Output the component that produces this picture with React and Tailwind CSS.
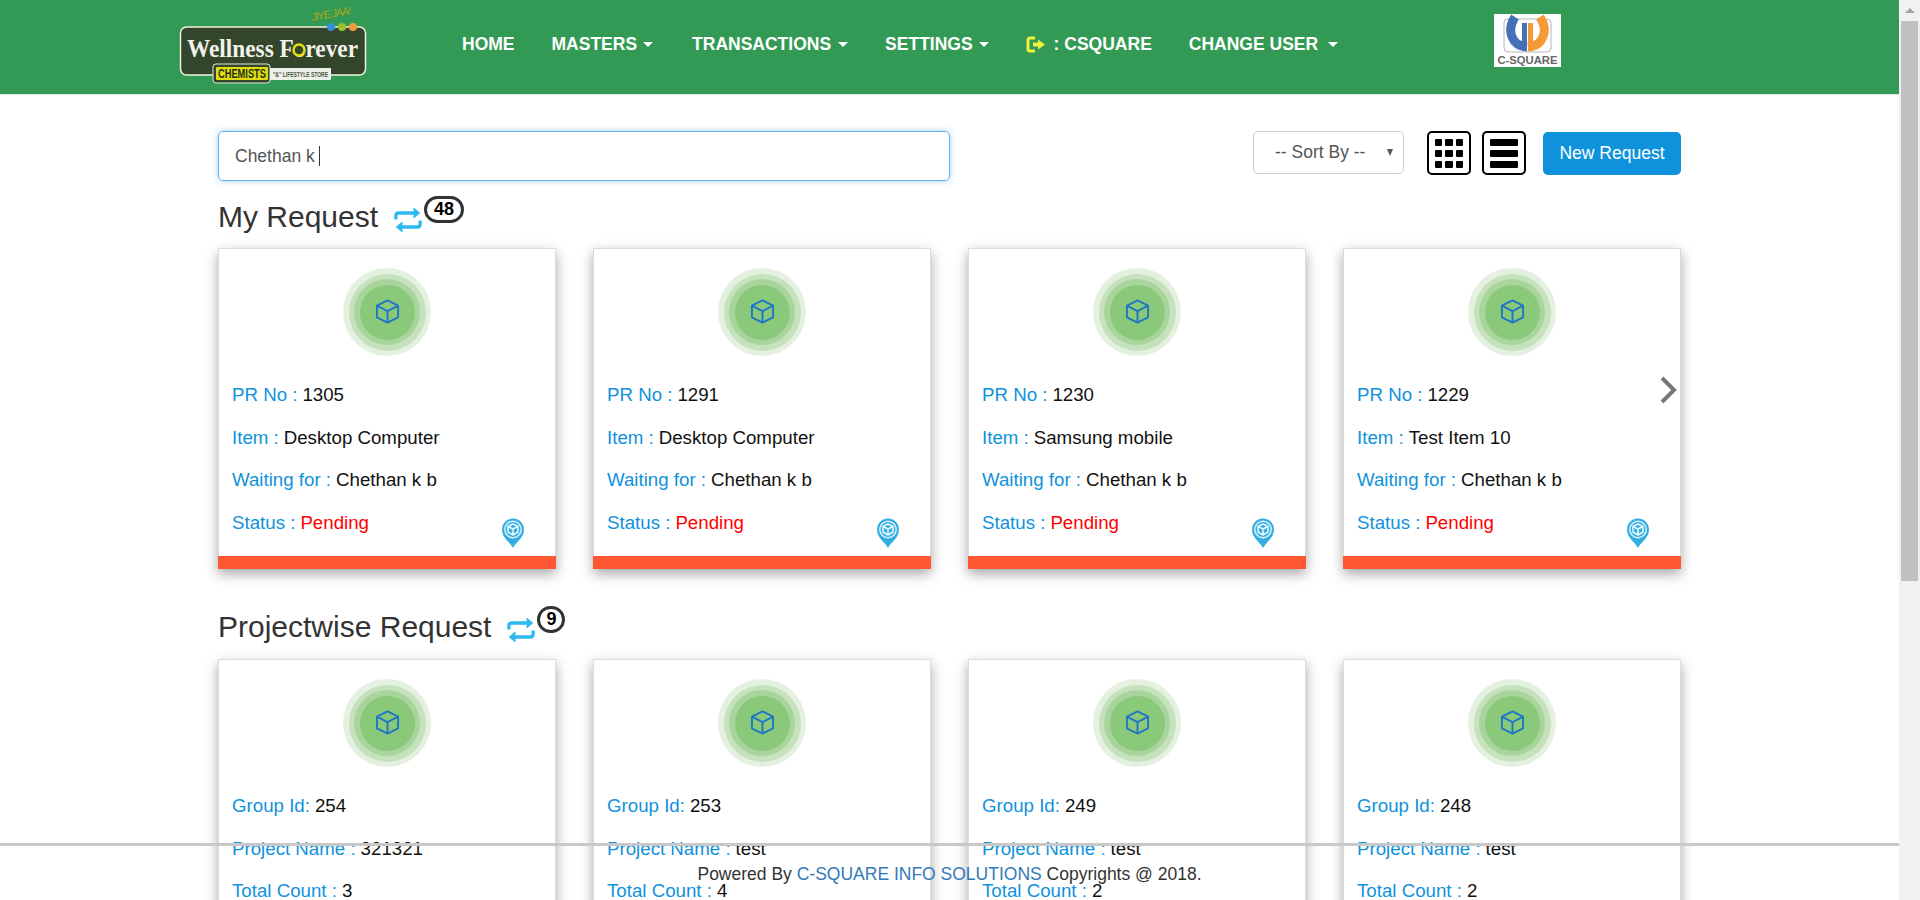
const myRequests = [
  { no: 1305, item: 'Desktop Computer' },
  { no: 1291, item: 'Desktop Computer' },
  { no: 1230, item: 'Samsung mobile' },
  { no: 1229, item: 'Test Item 10' }
]

const projectRequests = [
  { id: 254, name: '321321', count: 3 },
  { id: 253, name: 'test', count: 4 },
  { id: 249, name: 'test', count: 2 },
  { id: 248, name: 'test', count: 2 }
]

function WellnessLogo() {
  return (
    <svg width="190" height="84" viewBox="0 0 190 84" className="block">
      <text x="133" y="20" fontSize="11" fontStyle="italic" fill="#a8a81a" fontFamily="Liberation Sans" transform="rotate(-10 133 20)" textLength="40">JIYE JAA!</text>
      <rect x="1.5" y="26" width="185" height="48" rx="6" fill="#33452a" stroke="#eef3dc" strokeWidth="1.5" />
      <circle cx="152" cy="26" r="4" fill="#2f8fd8" />
      <circle cx="163" cy="26" r="4" fill="#9cbf2c" />
      <circle cx="174" cy="26" r="4" fill="#f39a3d" />
      <text x="8" y="56" fontSize="26" fontWeight="700" fill="#f2f2ea" fontFamily="Liberation Serif" textLength="171" lengthAdjust="spacingAndGlyphs">Wellness Forever</text>
      <circle cx="120" cy="49" r="5.5" fill="#33452a" stroke="#e8dc14" strokeWidth="2.5" />
      <rect x="34" y="63" width="57" height="19" rx="3" fill="#33452a" stroke="#e6ecd8" strokeWidth="1" />
      <rect x="37" y="66" width="52" height="13" rx="1" fill="#e3dc0c" />
      <text x="39" y="77" fontSize="12" fontWeight="700" fill="#22301a" fontFamily="Liberation Sans" textLength="48" lengthAdjust="spacingAndGlyphs">CHEMISTS</text>
      <rect x="91" y="67" width="61" height="12" rx="1" fill="#eef0ea" />
      <text x="94" y="76" fontSize="7" fontWeight="700" fill="#4a5540" fontFamily="Liberation Sans" textLength="55" lengthAdjust="spacingAndGlyphs">"&" LIFESTYLE STORE</text>
    </svg>
  )
}

function CsquareLogo() {
  return (
    <div className="w-[67px] h-[53px] bg-white">
      <svg width="67" height="53" viewBox="0 0 67 53" className="block">
        <rect x="10" y="5" width="47" height="33" rx="4" fill="none" stroke="#b5b5b5" strokeWidth="1" />
        <path d="M21 3 C12 17 18 32 33 33" fill="none" stroke="#4470b8" strokeWidth="9" />
        <path d="M30.5 9 V37" stroke="#4470b8" strokeWidth="5" />
        <path d="M46 3 C55 17 49 32 34 33" fill="none" stroke="#f59a35" strokeWidth="9" />
        <path d="M36.5 9 V37" stroke="#f59a35" strokeWidth="5" />
        <text x="33.5" y="50" textAnchor="middle" fontSize="11" fontWeight="700" fill="#666" fontFamily="Liberation Sans" textLength="60" lengthAdjust="spacingAndGlyphs">C-SQUARE</text>
      </svg>
    </div>
  )
}

function NavItem({ label, caret, gapClass }) {
  return (
    <span className="flex items-center text-white font-bold text-[17.5px] leading-none">
      {label}
      {caret && <span className={`${gapClass} w-0 h-0 border-x-[5px] border-x-transparent border-t-[5px] border-t-white`}></span>}
    </span>
  )
}

function CubeBadge() {
  return (
    <div className="flex justify-center pt-[19px] pb-[19px]">
      <div className="w-[88px] h-[88px] rounded-full bg-[#e4f1e0] flex items-center justify-center">
        <div className="w-[77px] h-[77px] rounded-full bg-[#c5e2bd] flex items-center justify-center">
          <div className="w-[66px] h-[66px] rounded-full bg-[#a9d49e] flex items-center justify-center">
            <div className="w-[55px] h-[55px] rounded-full bg-[#8bc97a] flex items-center justify-center">
              <svg width="25" height="25" viewBox="0 0 26 26" fill="none" stroke="#1f77c4" strokeWidth="2" strokeLinejoin="round" className="-mt-[2px]">
                <path d="M13 1.5 L24 7 V19 L13 24.5 L2 19 V7 Z" />
                <path d="M2 7 L13 12.5 L24 7 M13 12.5 V24.5" />
              </svg>
            </div>
          </div>
        </div>
      </div>
    </div>
  )
}

function MapPin() {
  return (
    <svg width="24" height="30" viewBox="0 0 24 30" className="absolute right-[30px] bottom-[20px]">
      <path d="M12 30 C9 24 1 20 1 11.5 A11 11 0 0 1 23 11.5 C23 20 15 24 12 30 Z" fill="#33aee3" />
      <circle cx="12" cy="11.5" r="8.2" fill="none" stroke="#d9f1fb" strokeWidth="1.5" />
      <path d="M12 6 L17 8.5 V14 L12 17 L7 14 V8.5 Z M7 8.5 L12 11 L17 8.5 M12 11 V17" fill="none" stroke="#e6f6fc" strokeWidth="1.6" />
    </svg>
  )
}

function Field({ label, value, valueClass = 'text-[#111]' }) {
  return (
    <div className="h-[42.6px] flex items-center text-[18.7px] whitespace-nowrap">
      <span className="text-[#0f92dc]">{label}</span>
      <span className={`ml-[5px] ${valueClass}`}>{value}</span>
    </div>
  )
}

function Card({ children, showBar = true, overlay }) {
  return (
    <div className="relative w-[338px] h-[321px] shrink-0 bg-white border border-[#dcdcdc] shadow-[0_5px_12px_rgba(0,0,0,0.35)] flex flex-col">
      <CubeBadge />
      <div className="px-[13px] -mt-[1px]">{children}</div>
      {overlay}
      {showBar && <div className="mt-auto -mx-px -mb-px h-[13px] bg-[#ff5732]"></div>}
    </div>
  )
}

function SectionTitle({ title, count, wide }) {
  return (
    <div className="flex items-start h-[54px]">
      <h2 className="text-[30px] leading-[36px] mt-[5px] text-[#333]">{title}</h2>
      <svg width="28" height="26" viewBox="0 0 30 27" fill="none" stroke="#2cb9f0" strokeWidth="3.5" className="ml-[16px] mt-[13px]">
        <path d="M2 13 V9 Q2 6 5 6 H25" />
        <path d="M21 1 L27 6 L21 11" fill="#2cb9f0" strokeWidth="1.5" />
        <path d="M28 14 V18 Q28 21 25 21 H5" />
        <path d="M9 16 L3 21 L9 26" fill="#2cb9f0" strokeWidth="1.5" />
      </svg>
      <span className={`${wide ? 'w-[40px]' : 'w-[28px]'} h-[27px] ml-[2px] mt-[2px] rounded-full border-[3px] border-[#333] bg-white text-black font-bold text-[18px] leading-[20px] text-center`}>
        {count}
      </span>
    </div>
  )
}

export default function App() {
  return (
    <div className="flex h-[900px] overflow-hidden bg-white" style={{ fontFamily: '"Liberation Sans", Arial, sans-serif' }}>
      <div className="relative flex-1 min-w-0 overflow-hidden">
        {/* Header */}
        <header className="h-[95px] bg-[#329a54] border-b border-[#e2e8e2] flex items-start">
          <div className="ml-[179px] mt-[1px] w-[190px]">
            <WellnessLogo />
          </div>
          <nav className="ml-[93px] mt-[36px] flex items-center gap-[37px]">
            <NavItem label="HOME" />
            <NavItem label="MASTERS" caret gapClass="ml-[6px] mr-[2px]" />
            <NavItem label="TRANSACTIONS" caret gapClass="ml-[7px]" />
            <NavItem label="SETTINGS" caret gapClass="ml-[6px]" />
            <span className="flex items-center text-white font-bold text-[17.5px] leading-none">
              <svg width="20" height="17" viewBox="0 0 20 17" fill="none" className="mr-[8px]">
                <path d="M9 2 H4 Q2 2 2 4 V13 Q2 15 4 15 H9" stroke="#eef23c" strokeWidth="3" />
                <path d="M7 6.5 H12 V3.5 L19 8.5 L12 13.5 V10.5 H7 Z" fill="#eef23c" />
              </svg>
              : CSQUARE
            </span>
            <NavItem label="CHANGE USER" caret gapClass="ml-[10px]" />
          </nav>
          <div className="ml-auto mr-[338px] mt-[14px]">
            <CsquareLogo />
          </div>
        </header>

        <main className="pl-[218px] pr-[218px]">
          {/* Toolbar */}
          <div className="flex items-start pt-[36px] h-[99px]">
            <div className="w-[732px] h-[50px] rounded-[5px] border border-[#66afe9] shadow-[0_0_6px_rgba(102,175,233,0.6)] flex items-center pl-4 text-[17.5px] text-[#555]">
              Chethan k
              <span className="ml-[4px] w-px h-[20px] bg-[#333]"></span>
            </div>
            <div className="ml-auto flex items-start">
              <div className="w-[151px] h-[43px] rounded-[5px] border border-[#ccc] flex items-center pl-[21px] text-[17.5px] text-[#555] whitespace-nowrap">
                -- Sort By --
                <span className="ml-[22px] w-0 h-0 border-x-[3.5px] border-x-transparent border-t-[7px] border-t-[#555]"></span>
              </div>
              <div className="ml-[23px] w-[44px] h-[44px] rounded-[5px] border-2 border-black grid grid-cols-3 gap-x-[3px] gap-y-[4px] p-[6px] content-center">
                {[...Array(9)].map((_, i) => (
                  <span key={i} className="h-[7px] rounded-[1px] bg-black"></span>
                ))}
              </div>
              <div className="ml-[11px] w-[44px] h-[44px] rounded-[5px] border-2 border-black flex flex-col justify-center gap-[4px] px-[6px]">
                <span className="h-[7px] rounded-[1px] bg-black"></span>
                <span className="h-[7px] rounded-[1px] bg-black"></span>
                <span className="h-[7px] rounded-[1px] bg-black"></span>
              </div>
              <button className="ml-[17px] mt-px w-[138px] h-[43px] rounded-[5px] bg-[#0f92dc] text-white text-[17.5px]">New Request</button>
            </div>
          </div>

          <SectionTitle title="My Request" count="48" wide />
          <div className="relative flex gap-[37px]">
            {myRequests.map(r => (
              <Card key={r.no} overlay={<MapPin />}>
                <Field label="PR No :" value={r.no} />
                <Field label="Item :" value={r.item} />
                <Field label="Waiting for :" value="Chethan k b" />
                <Field label="Status :" value="Pending" valueClass="text-[#f00]" />
              </Card>
            ))}
            <svg width="18" height="28" viewBox="0 0 18 28" fill="none" stroke="#777" strokeWidth="4" className="absolute right-[4px] top-[128px]">
              <path d="M3 2 L15 14 L3 26" />
            </svg>
          </div>

          <div className="mt-[35px] mb-[1px]">
            <SectionTitle title="Projectwise Request" count="9" />
          </div>
          <div className="flex gap-[37px]">
            {projectRequests.map(r => (
              <Card key={r.id} showBar={false}>
                <Field label="Group Id:" value={r.id} />
                <Field label="Project Name :" value={r.name} />
                <Field label="Total Count :" value={r.count} />
              </Card>
            ))}
          </div>
        </main>

        {/* Fixed footer, see-through over the cards */}
        <div className="absolute left-0 right-0 top-[843px] h-[57px] border-t-[3px] border-[#c8c8c8] text-center pt-[18px] text-[17.5px] leading-[20px] text-[#333]">
          Powered By <span className="text-[#337ab7]">C-SQUARE INFO SOLUTIONS</span> Copyrights @ 2018.
        </div>
      </div>

      {/* Scrollbar */}
      <div className="w-[21px] shrink-0 bg-[#f1f1f1] flex flex-col items-center">
        <div className="h-[21px] flex items-center justify-center">
          <span className="w-0 h-0 border-x-[5px] border-x-transparent border-b-[5px] border-b-[#a3a3a3]"></span>
        </div>
        <div className="w-[17px] h-[560px] bg-[#c1c1c1]"></div>
      </div>
    </div>
  )
}
